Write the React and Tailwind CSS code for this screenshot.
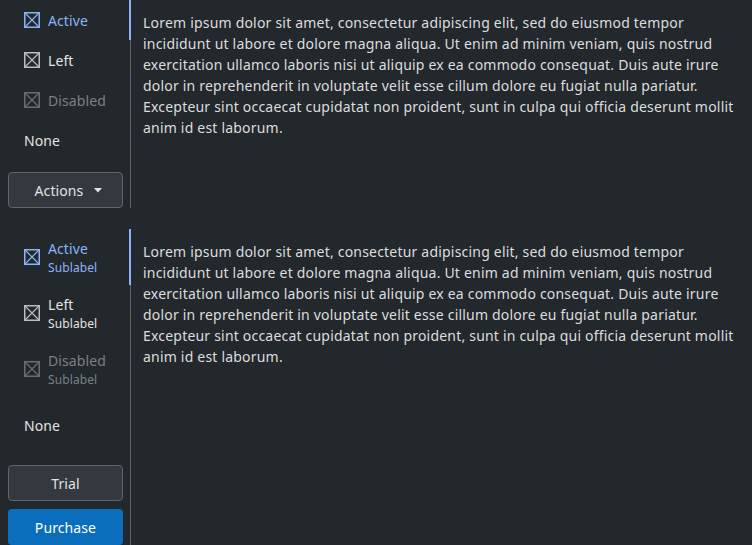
import React from 'react';

const lorem =
  'Lorem ipsum dolor sit amet, consectetur adipiscing elit, sed do eiusmod tempor incididunt ut labore et dolore magna aliqua. Ut enim ad minim veniam, quis nostrud exercitation ullamco laboris nisi ut aliquip ex ea commodo consequat. Duis aute irure dolor in reprehenderit in voluptate velit esse cillum dolore eu fugiat nulla pariatur. Excepteur sint occaecat cupidatat non proident, sunt in culpa qui officia deserunt mollit anim id est laborum.';

const BoxIcon = ({ className }) => (
  <svg width="16" height="16" viewBox="0 0 16 16" className={className} fill="none" stroke="currentColor" strokeWidth="1.5">
    <rect x="0.75" y="0.75" width="14.5" height="14.5" />
    <path d="M1 1L15 15M15 1L1 15" strokeWidth="1.2" />
  </svg>
);

const tone = {
  active: 'text-[#8ab4f8]',
  normal: 'text-[#e3e3e3]',
  disabled: 'text-[#7b8084]',
};

const NavItem = ({ label, state, sublabel, tall, noIcon }) => (
  <div className={`relative flex items-center gap-2 pl-6 ${tall ? 'h-14' : 'h-10'} ${tone[state]}`}>
    {state === 'active' && <div className="absolute right-[-1px] top-0 bottom-0 w-[2px] bg-[#8ab4f8]" />}
    {!noIcon && <BoxIcon className={state === 'active' ? '' : 'opacity-80'} />}
    <div className="flex flex-col pt-[1px] tracking-[0.1px]">
      <span className="text-[14px] leading-[20px]">{label}</span>
      {sublabel && <span className="text-[12px] leading-[16px] mt-[1px]">{sublabel}</span>}
    </div>
  </div>
);

const Paragraph = () => (
  <div className="flex-1 pl-3 pr-3 pt-3 text-[14px] leading-[21px] tracking-[0.2px] text-[#dcdddf]">{lorem}</div>
);

export default function App() {
  return (
    <div className="w-[752px] h-[545px] overflow-hidden bg-[#23282c] font-['Noto_Sans',sans-serif]">
      <div className="flex h-[208px]">
        <div className="w-[131px] shrink-0 border-r border-[#5b6166] flex flex-col">
          <NavItem label="Active" state="active" />
          <NavItem label="Left" state="normal" />
          <NavItem label="Disabled" state="disabled" />
          <NavItem label="None" state="normal" noIcon />
          <div className="pl-2 pr-[7px] mt-3">
            <button className="w-full h-9 rounded border border-[#5f656a] bg-[#33393e] text-[14px] tracking-[0.1px] text-[#e3e3e3] flex items-center justify-center gap-[11px]">
              <span>Actions</span>
              <svg width="8" height="5" viewBox="0 0 8 5" className="mr-[-6px]"><path d="M0 0H8L4 4.5Z" fill="#e3e3e3" /></svg>
            </button>
          </div>
        </div>
        <Paragraph />
      </div>
      <div className="flex h-[316px] mt-[21px]">
        <div className="w-[131px] shrink-0 border-r border-[#5b6166] flex flex-col">
          <NavItem label="Active" sublabel="Sublabel" state="active" tall />
          <NavItem label="Left" sublabel="Sublabel" state="normal" tall />
          <NavItem label="Disabled" sublabel="Sublabel" state="disabled" tall />
          <NavItem label="None" state="normal" noIcon tall />
          <div className="pl-2 pr-[7px] mt-3 flex flex-col gap-2">
            <button className="w-full h-9 rounded border border-[#5f656a] bg-[#33393e] text-[14px] tracking-[0.1px] text-[#e3e3e3]">Trial</button>
            <button className="w-full h-9 rounded bg-[#0a6ebd] text-[14px] tracking-[0.1px] text-white">Purchase</button>
          </div>
        </div>
        <Paragraph />
      </div>
    </div>
  );
}
